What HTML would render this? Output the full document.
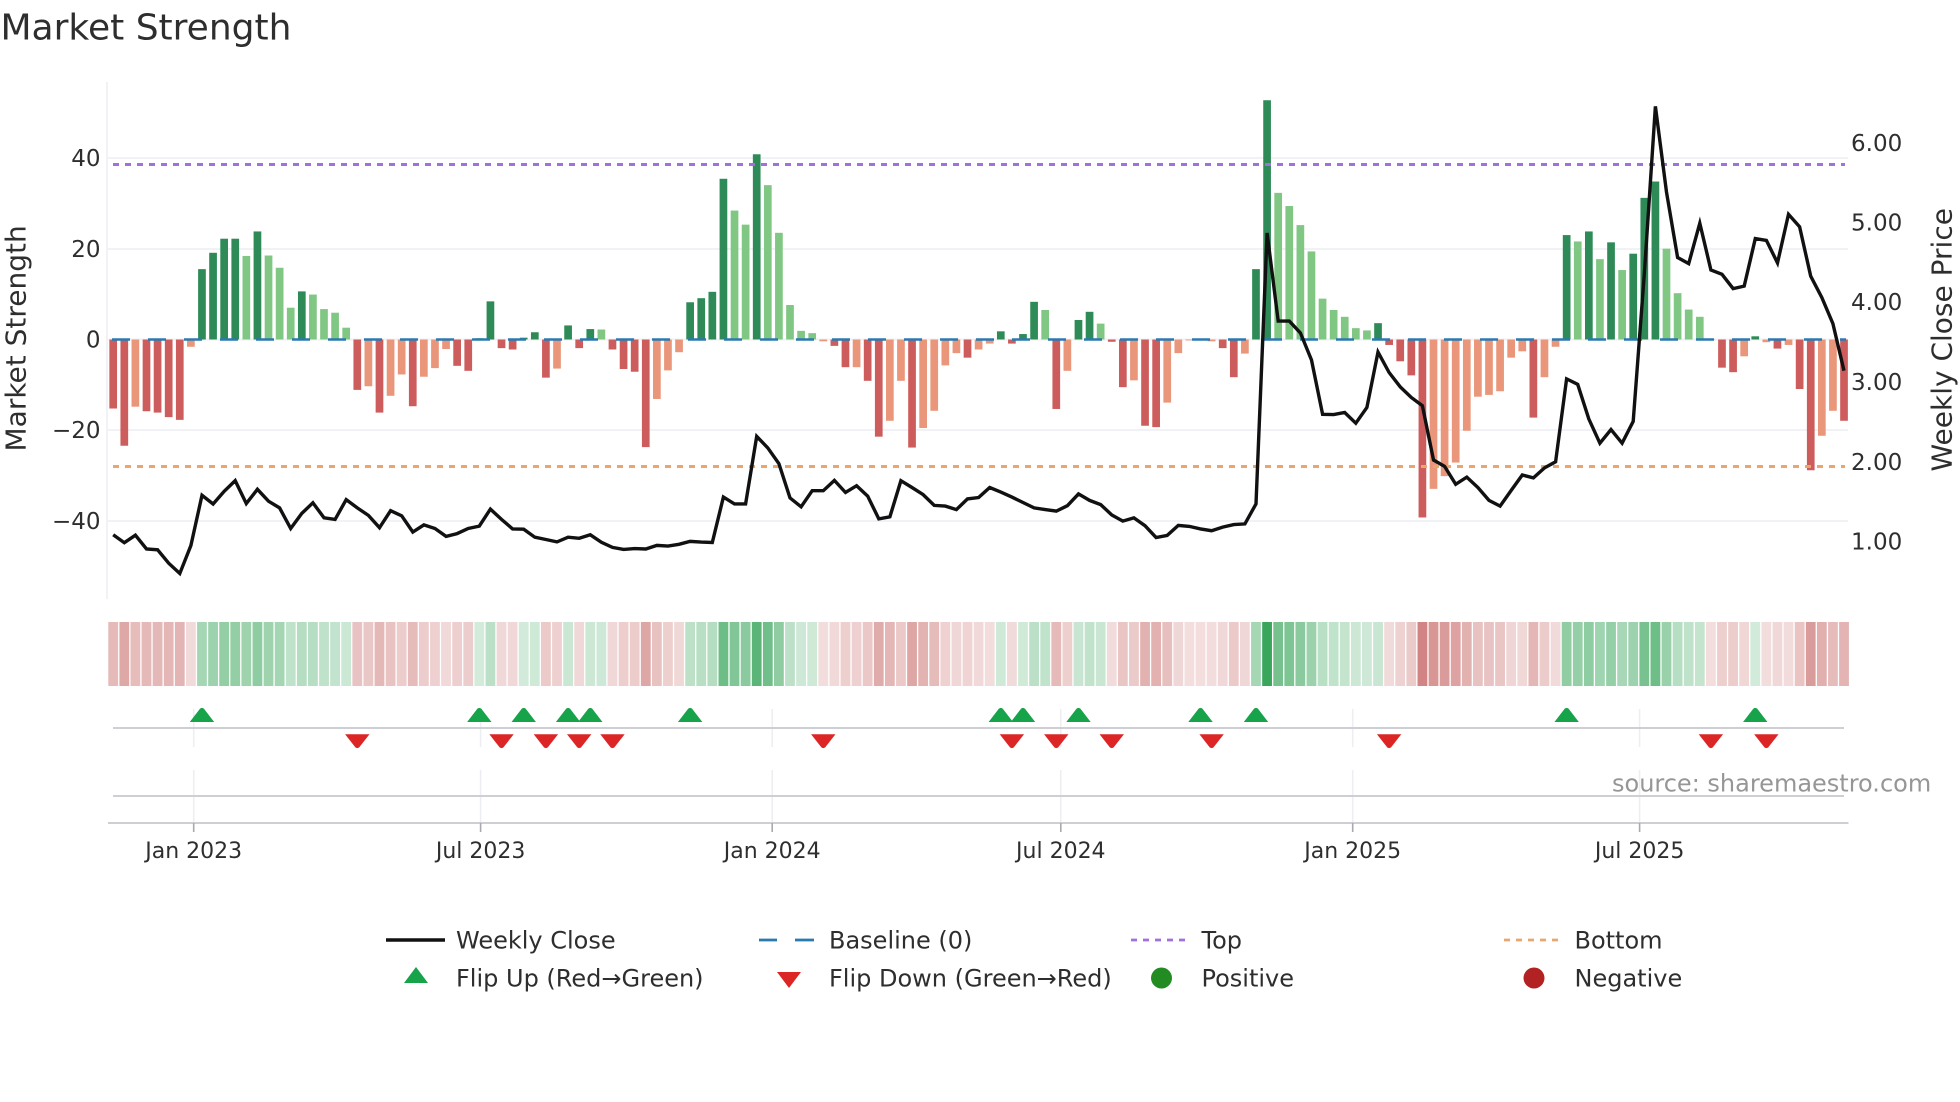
<!DOCTYPE html>
<html lang="en">
<head>
<meta charset="utf-8">
<title>Market Strength</title>
<style>
html,body{margin:0;padding:0;background:#fff;width:1960px;height:1102px;overflow:hidden}
svg{display:block;filter:blur(0.3px)}
text{font-family:"DejaVu Sans","Liberation Sans",sans-serif;fill:#2e2e2e}
.t{font-size:23px}
.x{font-size:22px;text-anchor:middle}
.l{font-size:24px}
</style>
</head>
<body>
<svg id="s" xmlns="http://www.w3.org/2000/svg" width="1960" height="1102" viewBox="0 0 1960 1102">
<g id="grid" stroke="#f0f2f5" stroke-width="2" fill="none">
<path d="M107 82V599M107 158H1848M107 249H1848M107 339.5H1848M107 430H1848M107 521H1848"/>
</g>
<g id="bars"></g>
<g id="heat"></g>
<path d="M112 339.5H1846" stroke="#2a7ab0" stroke-width="2.6" stroke-dasharray="18 18" fill="none"/>
<path d="M113 164.5H1845" stroke="#a070dc" stroke-width="3" stroke-dasharray="6 6" fill="none"/>
<path d="M113 466.5H1845" stroke="#eaa66c" stroke-width="3" stroke-dasharray="6 6" fill="none"/>
<path id="price" fill="none" stroke="#111" stroke-width="3.4" stroke-linejoin="miter" stroke-miterlimit="10"/>

<text x="0.5" y="39.5" style="font-size:36px">Market Strength</text>
<text transform="translate(25.5,451.5) rotate(-90)" style="font-size:28px">Market Strength</text>
<text transform="translate(1951.5,471.5) rotate(-90)" style="font-size:28px">Weekly Close Price</text>

<g text-anchor="end">
<text class="t" x="100.5" y="166.2">40</text>
<text class="t" x="100.5" y="257.2">20</text>
<text class="t" x="100.5" y="347.7">0</text>
<text class="t" x="100.5" y="438.2">−20</text>
<text class="t" x="100.5" y="529.2">−40</text>
</g>
<g>
<text class="t" x="1851" y="151.2">6.00</text>
<text class="t" x="1851" y="230.7">5.00</text>
<text class="t" x="1851" y="310.2">4.00</text>
<text class="t" x="1851" y="390.2">3.00</text>
<text class="t" x="1851" y="470.2">2.00</text>
<text class="t" x="1851" y="549.7">1.00</text>
</g>

<g stroke="#eceef2" stroke-width="1.5" fill="none">
<path d="M193.7 709V747M193.7 770V823M480.6 709V747M480.6 770V823M772.2 709V747M772.2 770V823M1060.8 709V747M1060.8 770V823M1352.7 709V747M1352.7 770V823M1639.6 709V747M1639.6 770V823"/>
</g>
<g stroke="#cdcfd4" stroke-width="2" fill="none">
<path d="M113 728H1844M113 796H1844M108 823H1848.5"/>
</g>
<g stroke="#a8aaae" stroke-width="1.6" fill="none">
<path d="M193.7 823V832M480.6 823V832M772.2 823V832M1060.8 823V832M1352.7 823V832M1639.6 823V832"/>
</g>
<g id="marks"></g>

<text x="1612" y="791.7" style="font-size:24px;fill:#969696">source: sharemaestro.com</text>

<text class="x" x="193.7" y="858">Jan 2023</text>
<text class="x" x="480.6" y="858">Jul 2023</text>
<text class="x" x="772.2" y="858">Jan 2024</text>
<text class="x" x="1060.8" y="858">Jul 2024</text>
<text class="x" x="1352.7" y="858">Jan 2025</text>
<text class="x" x="1639.6" y="858">Jul 2025</text>

<path d="M386 940H445" stroke="#111" stroke-width="3.4"/>
<path d="M759 940H777M795 940H814" stroke="#2a7ab0" stroke-width="2.8"/>
<path d="M1131 940H1186" stroke="#a070dc" stroke-width="2.8" stroke-dasharray="6 6"/>
<path d="M1504 940H1559" stroke="#eaa66c" stroke-width="2.8" stroke-dasharray="6 6"/>
<path d="M416 967L428 983H404Z" fill="#16a34a"/>
<path d="M777 972H801L789 988Z" fill="#dc2626"/>
<circle cx="1161.5" cy="978" r="10.5" fill="#228b22"/>
<circle cx="1534" cy="978" r="10.5" fill="#b22222"/>

<text class="l" x="456" y="948.5">Weekly Close</text>
<text class="l" x="829" y="948.5">Baseline (0)</text>
<text class="l" x="1201.5" y="948.5">Top</text>
<text class="l" x="1574.5" y="948.5">Bottom</text>
<text class="l" x="456" y="986.5">Flip Up (Red→Green)</text>
<text class="l" x="829" y="986.5">Flip Down (Green→Red)</text>
<text class="l" x="1201.5" y="986.5">Positive</text>
<text class="l" x="1574.5" y="986.5">Negative</text>
</svg>
<script>
(function(){
var NS="http://www.w3.org/2000/svg";
function el(p,n,a){var e=document.createElementNS(NS,n);for(var k in a)e.setAttribute(k,a[k]);p.appendChild(e);return e}
var data="-15.2 -23.4 -14.8l -15.8 -16.1 -17.1 -17.7 -1.6l 15.5 19.1 22.2 22.2 18.4l 23.8 18.5l 15.8l 7l 10.6 9.9l 6.7l 5.9l 2.6l -11.1 -10.3l -16.1 -12.4l -7.7l -14.7 -8.2l -6.3l -2.1l -5.8 -6.9 0.3l 8.4 -1.9 -2.2 0.4 1.6 -8.4 -6.4l 3.1 -1.9 2.3 2.2l -2.2 -6.5 -7.1 -23.7 -13.1l -6.8l -2.8l 8.2 9.1 10.5 35.4 28.4l 25.3l 40.8 34l 23.5l 7.6l 1.9l 1.4l -0.4l -1.4 -6.1 -6.1l -9.1 -21.4 -17.9l -9.1l -23.8 -19.5l -15.7l -5.7l -3l -4 -2.2l -0.9l 1.8 -0.9 1.2 8.3 6.5l -15.3 -6.9l 4.3 6.1 3.5l -0.5 -10.5 -9l -19 -19.3 -13.9l -3l -0.2l -0.1l -0.4l -1.9 -8.3 -3.1l 15.5 52.7 32.3l 29.4l 25.2l 19.4l 9l 6.5l 5l 2.5l 2l 3.6 -1.2 -4.8 -7.9 -39.2 -32.9l -30.1l -27.1l -20.1l -12.6l -12.2l -11.4l -4l -2.6l -17.2 -8.3l -1.6l 23 21.6l 23.8 17.7l 21.4 15.3l 18.9 31.2 34.8 20l 10.2l 6.6l 5l -0.1l -6.2 -7.2 -3.7l 0.7 -0.6l -2 -1.2l -10.9 -28.8 -21.2l -15.7l -17.9".split(" ");
var bars=document.getElementById("bars"),heat=document.getElementById("heat");
var X0=113.2,DX=11.095,Z=339.5,K=4.54,W=7.7;
data.forEach(function(s,i){
 var v=parseFloat(s),lt=s.charAt(s.length-1)=="l",x=X0+DX*i,h=Math.abs(v)*K;
 var c=v>=0?(lt?"#81c784":"#2e8b57"):(lt?"#e9967a":"#cd5c5c");
 el(bars,"rect",{x:(x-W/2).toFixed(2),y:(v>=0?Z-h:Z).toFixed(2),width:W,height:h.toFixed(2),fill:c});
 var a=Math.min(0.9,0.19+0.0125*Math.abs(v));
 var b=v>=0?"23,150,63":(lt?"190,80,78":"187,74,72");
 el(heat,"rect",{x:(108.3+DX*i).toFixed(2),y:622,width:9.8,height:64,fill:"rgba("+b+","+a.toFixed(3)+")"});
});
var a1=[1353,1373,1354,1389,1391,1425,1451,1380,1253,1275,1243,1216,1274,1238,1268,1285,1337,1299,1272,1310,1314,1264,1285,1304,1335,1292,1305,1346,1328,1337,1357,1350,1337,1331,1288,1314,1338,1339,1359,1365,1371,1359,1362,1353,1372,1385,1390,1388,1389];
var a2=[1359,1361,1356,1348,1350,1351,1224,1243,1243,1054,1086,1130,1226,1251,1206,1206,1177,1211,1192,1221,1285,1279,1178,1197,1217,1247,1249,1259,1229,1225,1197,1210,1224,1239,1254,1259,1263,1248,1215,1233,1245,1274,1291,1282,1304,1337,1331,1303,1306,1313,1318,1308,1301,1299,1243,484,731,731,764,840,992,993,987,1017,973,818,875,915,945,968,1120,1138,1188,1168,1197,1233,1249,1205,1162,1170,1142,1125,893,908,1005,1073,1035,1073,1012,600,130,370,553,570,457,588,600,640,633,500,505,568,432,467,605,665,738,870];
var pts=[];
a1.forEach(function(y,i){pts.push([X0+DX*i,y/2.53])});
a2.forEach(function(y,i){pts.push([X0+DX*(i+49),60+y/2.8])});
document.getElementById("price").setAttribute("d","M"+pts.map(function(p){return p[0].toFixed(1)+" "+p[1].toFixed(1)}).join("L"));
var m=document.getElementById("marks");
[8,33,37,41,43,52,80,82,87,98,103,131,148].forEach(function(i){var x=X0+DX*i;
 el(m,"path",{d:"M"+(x-12.2)+" 722L"+(x-2)+" 708.8Q"+x+" 707 "+(x+2)+" 708.8L"+(x+12.2)+" 722Z",fill:"#16a34a"});});
[22,35,39,42,45,64,81,85,90,99,115,144,149].forEach(function(i){var x=X0+DX*i;
 el(m,"path",{d:"M"+(x-12.2)+" 734.3H"+(x+12.2)+"L"+(x+2)+" 747.2Q"+x+" 749 "+(x-2)+" 747.2Z",fill:"#dc2626"});});
})();
</script>
</body>
</html>
